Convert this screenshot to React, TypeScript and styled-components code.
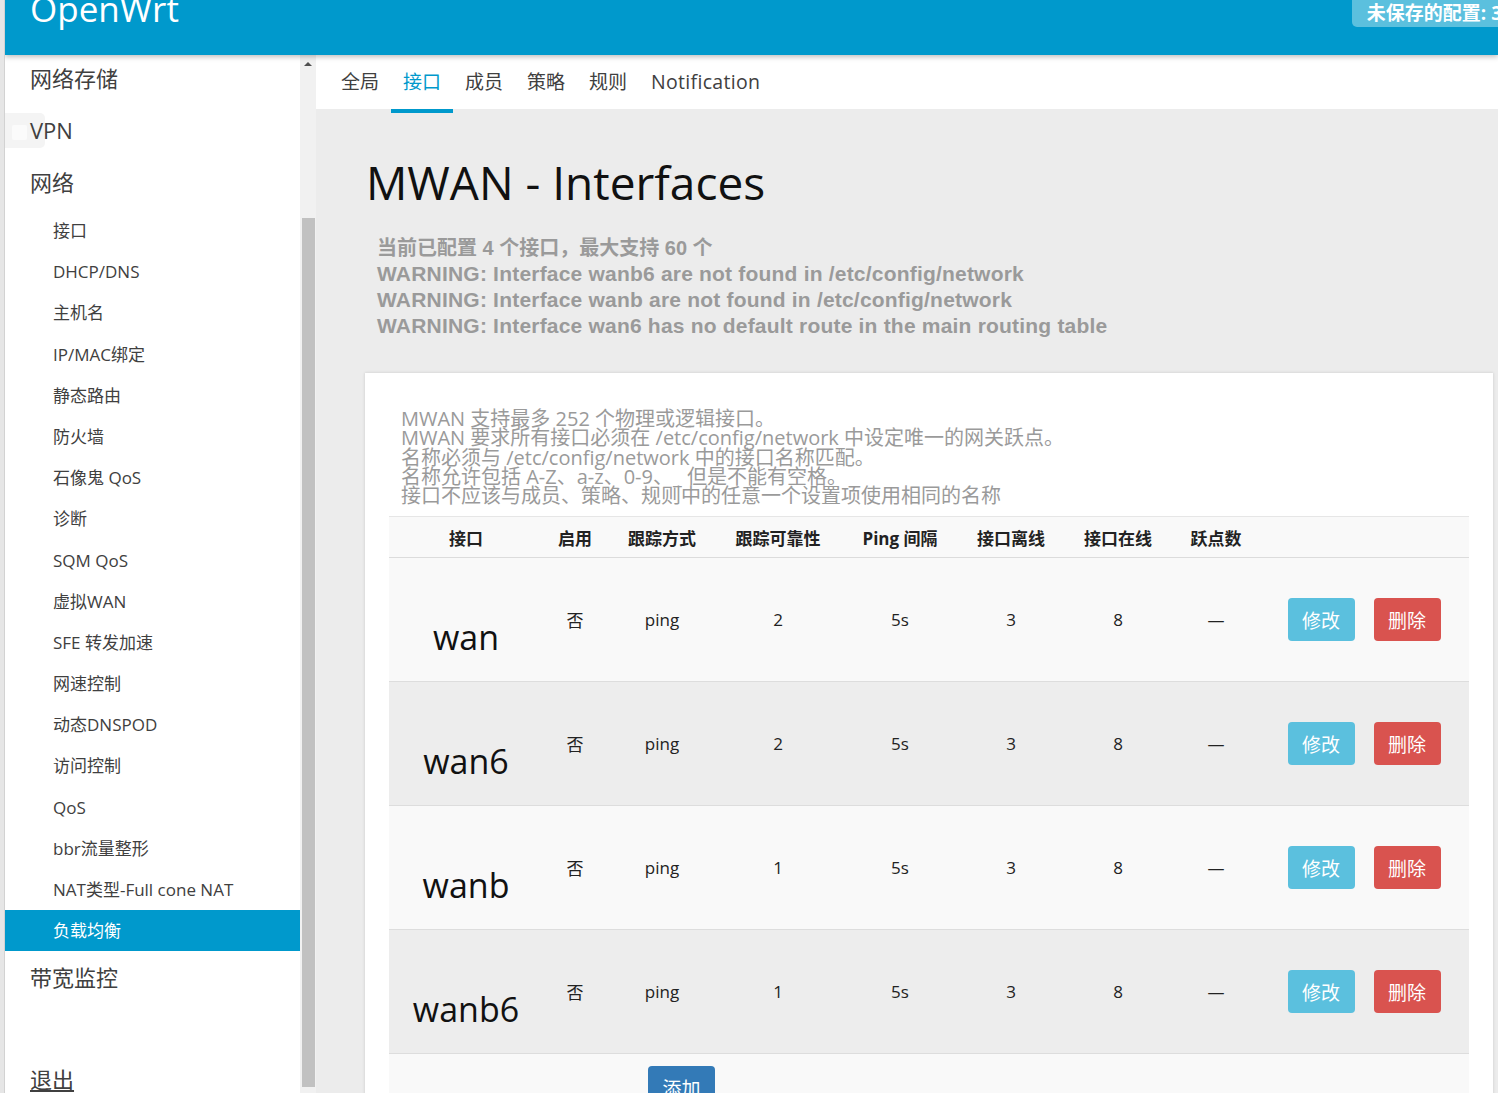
import React from 'react';
import styled, { createGlobalStyle, css } from 'styled-components';

const GlobalStyle = createGlobalStyle`
  html, body {
    margin: 0;
    padding: 0;
    background: #e6e6e6;
    overflow: hidden;
  }
  body {
    font-family: "Open Sans", "Noto Sans CJK SC", sans-serif;
    color: #404040;
  }
`;

const Page = styled.div`
  margin-left: 4px;
  border-left: 1px solid #d2d2d2;
  height: 1093px;
  display: flex;
  flex-direction: column;
  background: #ececec;
  overflow: hidden;
`;

const Header = styled.header`
  height: 55px;
  flex-shrink: 0;
  background: #0099cc;
  display: flex;
  justify-content: space-between;
  align-items: flex-start;
  box-shadow: 0 2px 5px rgba(0, 0, 0, 0.25);
  position: relative;
  z-index: 2;
  overflow: hidden;
`;

const Brand = styled.div`
  color: #fff;
  font-size: 35px;
  line-height: 36px;
  margin: -9px 0 0 25px;
`;

const Badge = styled.div`
  background: #5bc0de;
  color: #fff;
  font-weight: bold;
  font-size: 19px;
  line-height: 27px;
  height: 27px;
  padding: 0 8px 0 15px;
  border-radius: 0 0 0 5px;
  white-space: nowrap;
  margin-right: -12px;
`;

const Body = styled.div`
  flex: 1;
  display: flex;
  min-height: 0;
`;

const Sidebar = styled.nav`
  width: 295px;
  background: #fff;
  flex-shrink: 0;
`;

const SideList = styled.div`
  margin-top: -3px;
`;

const TopItem = styled.div<{ $underline?: boolean }>`
  position: relative;
  height: 52px;
  line-height: 52px;
  font-size: 22px;
  padding-left: 25px;
  color: #404040;
  ${(p) =>
    p.$underline &&
    css`
      text-decoration: underline;
      margin-top: 50px;
    `}
`;

const VpnMark = styled.span`
  position: absolute;
  left: 0;
  top: 9px;
  width: 40px;
  height: 35px;
  background: #f4f4f4;
  border-radius: 0 5px 5px 0;
  &::after {
    content: '';
    position: absolute;
    left: 7px;
    top: 12px;
    width: 15px;
    height: 15px;
    background: #fbfbfb;
    border-radius: 2px;
  }
`;

const Label = styled.span`
  position: relative;
`;

const SubList = styled.div`
  padding-top: 2px;
`;

const SubItem = styled.div<{ $active?: boolean }>`
  height: 41.2px;
  line-height: 41.2px;
  font-size: 17px;
  padding-left: 48px;
  color: #404040;
  ${(p) =>
    p.$active &&
    css`
      background: #0099cc;
      color: #fff;
    `}
`;

const ScrollTrack = styled.div`
  width: 16px;
  flex-shrink: 0;
  background: #f1f1f1;
  padding-top: 5px;
  display: flex;
  flex-direction: column;
  align-items: center;
`;

const ScrollArrow = styled.div`
  width: 0;
  height: 0;
  border-left: 4px solid transparent;
  border-right: 4px solid transparent;
  border-bottom: 4px solid #505050;
  margin-top: 2px;
`;

const ScrollThumb = styled.div`
  width: 13px;
  height: 869px;
  margin-top: 152px;
  background: #c1c1c1;
`;

const Main = styled.main`
  flex: 1;
  background: #ececec;
  min-width: 0;
`;

const TabBar = styled.div`
  height: 54px;
  background: #fff;
  display: flex;
  padding-left: 13px;
`;

const Tab = styled.div<{ $active?: boolean }>`
  height: 54px;
  line-height: 54px;
  padding: 0 12px;
  font-size: 19px;
  color: #404040;
  ${(p) =>
    p.$active &&
    css`
      color: #0099cc;
      border-bottom: 4px solid #0099cc;
    `}
`;

const NotificationTab = styled(Tab)`
  font-size: 19.5px;
  letter-spacing: 0.3px;
`;

const Content = styled.div`
  padding: 44px 5px 0 49px;
`;

const Title = styled.h2`
  margin: 0 0 0 1px;
  font-weight: normal;
  font-size: 46px;
  line-height: 58px;
  color: #111;
`;

const Warnings = styled.div`
  margin: 24px 0 0 12px;
  font-family: "Liberation Sans", "Noto Sans CJK SC", sans-serif;
  font-weight: bold;
  color: #9a9a9a;
`;

const WarnLine = styled.div<{ $latin?: boolean }>`
  font-size: ${(p) => (p.$latin ? '21px' : '20px')};
  letter-spacing: ${(p) => (p.$latin ? '0.2px' : '0')};
  line-height: 26px;
`;

const Card = styled.div`
  margin-top: 34px;
  background: #fff;
  padding: 36px 24px 0;
  box-shadow: 0 0 3px rgba(0, 0, 0, 0.15);
`;

const Description = styled.div`
  padding: 0 0 11px 12px;
  font-size: 20px;
  line-height: 19.3px;
  color: #9a9a9a;
`;

const cols = '154px 64px 110px 122px 122px 100px 114px 82px 1fr';

const HeadRow = styled.div`
  display: grid;
  grid-template-columns: ${cols};
  height: 40px;
  align-items: center;
  background: #f9f9f9;
  border-top: 1px solid #e6e6e6;
  border-bottom: 1px solid #dcdcdc;
`;

const HeadCell = styled.div`
  text-align: center;
  font-weight: bold;
  font-size: 17px;
  color: #222;
`;

const Row = styled.div<{ $alt?: boolean }>`
  display: grid;
  grid-template-columns: ${cols};
  height: 123px;
  align-items: center;
  background: ${(p) => (p.$alt ? '#ededed' : '#f9f9f9')};
  border-bottom: 1px solid #dddddd;
`;

const NameCell = styled.div`
  text-align: center;
  font-size: 34px;
  color: #111;
  padding-top: 34px;
`;

const Cell = styled.div`
  text-align: center;
  font-size: 17px;
  color: #222;
`;

const Actions = styled.div`
  display: flex;
  justify-content: center;
  gap: 19px;
  padding-left: 2px;
`;

const Btn = styled.button<{ $kind: 'edit' | 'del' | 'add' }>`
  width: 67px;
  height: 43px;
  border: none;
  border-radius: 4px;
  color: #fff;
  font-family: "Open Sans", "Noto Sans CJK SC", sans-serif;
  font-size: 19px;
  padding: 0;
  background: ${(p) => (p.$kind === 'edit' ? '#5bc0de' : p.$kind === 'del' ? '#d9534f' : '#337ab7')};
`;

const FooterRow = styled.div`
  background: #f9f9f9;
  height: 60px;
  padding: 12px 0 0 259px;
`;

const subItems = [
  '接口',
  'DHCP/DNS',
  '主机名',
  'IP/MAC绑定',
  '静态路由',
  '防火墙',
  '石像鬼 QoS',
  '诊断',
  'SQM QoS',
  '虚拟WAN',
  'SFE 转发加速',
  '网速控制',
  '动态DNSPOD',
  '访问控制',
  'QoS',
  'bbr流量整形',
  'NAT类型-Full cone NAT',
  '负载均衡',
];

const tabs = ['全局', '接口', '成员', '策略', '规则'];

const headers = ['接口', '启用', '跟踪方式', '跟踪可靠性', 'Ping 间隔', '接口离线', '接口在线', '跃点数', ''];

const interfaces = [
  { name: 'wan', reliability: 2 },
  { name: 'wan6', reliability: 2 },
  { name: 'wanb', reliability: 1 },
  { name: 'wanb6', reliability: 1 },
];

const App: React.FC = () => {
  return (
    <>
      <GlobalStyle />
      <Page>
        <Header>
          <Brand>OpenWrt</Brand>
          <Badge>未保存的配置: 3</Badge>
        </Header>
        <Body>
          <Sidebar>
            <SideList>
              <TopItem>网络存储</TopItem>
              <TopItem>
                <VpnMark />
                <Label>VPN</Label>
              </TopItem>
              <TopItem>网络</TopItem>
              <SubList>
                {subItems.map((s, i) => (
                  <SubItem key={s} $active={i === subItems.length - 1}>
                    {s}
                  </SubItem>
                ))}
              </SubList>
              <TopItem>带宽监控</TopItem>
              <TopItem $underline>退出</TopItem>
            </SideList>
          </Sidebar>
          <ScrollTrack>
            <ScrollArrow />
            <ScrollThumb />
          </ScrollTrack>
          <Main>
            <TabBar>
              {tabs.map((t) => (
                <Tab key={t} $active={t === '接口'}>
                  {t}
                </Tab>
              ))}
              <NotificationTab>Notification</NotificationTab>
            </TabBar>
            <Content>
              <Title>MWAN - Interfaces</Title>
              <Warnings>
                <WarnLine>当前已配置 4 个接口，最大支持 60 个</WarnLine>
                <WarnLine $latin>WARNING: Interface wanb6 are not found in /etc/config/network</WarnLine>
                <WarnLine $latin>WARNING: Interface wanb are not found in /etc/config/network</WarnLine>
                <WarnLine $latin>WARNING: Interface wan6 has no default route in the main routing table</WarnLine>
              </Warnings>
              <Card>
                <Description>
                  <div>MWAN 支持最多 252 个物理或逻辑接口。</div>
                  <div>MWAN 要求所有接口必须在 /etc/config/network 中设定唯一的网关跃点。</div>
                  <div>名称必须与 /etc/config/network 中的接口名称匹配。</div>
                  <div>名称允许包括 A-Z、a-z、0-9、_ 但是不能有空格。</div>
                  <div>接口不应该与成员、策略、规则中的任意一个设置项使用相同的名称</div>
                </Description>
                <HeadRow>
                  {headers.map((h, i) => (
                    <HeadCell key={i}>{h}</HeadCell>
                  ))}
                </HeadRow>
                {interfaces.map((itf, i) => (
                  <Row key={itf.name} $alt={i % 2 === 1}>
                    <NameCell>{itf.name}</NameCell>
                    <Cell>否</Cell>
                    <Cell>ping</Cell>
                    <Cell>{itf.reliability}</Cell>
                    <Cell>5s</Cell>
                    <Cell>3</Cell>
                    <Cell>8</Cell>
                    <Cell>—</Cell>
                    <Actions>
                      <Btn $kind="edit">修改</Btn>
                      <Btn $kind="del">删除</Btn>
                    </Actions>
                  </Row>
                ))}
                <FooterRow>
                  <Btn $kind="add">添加</Btn>
                </FooterRow>
              </Card>
            </Content>
          </Main>
        </Body>
      </Page>
    </>
  );
};

export default App;
